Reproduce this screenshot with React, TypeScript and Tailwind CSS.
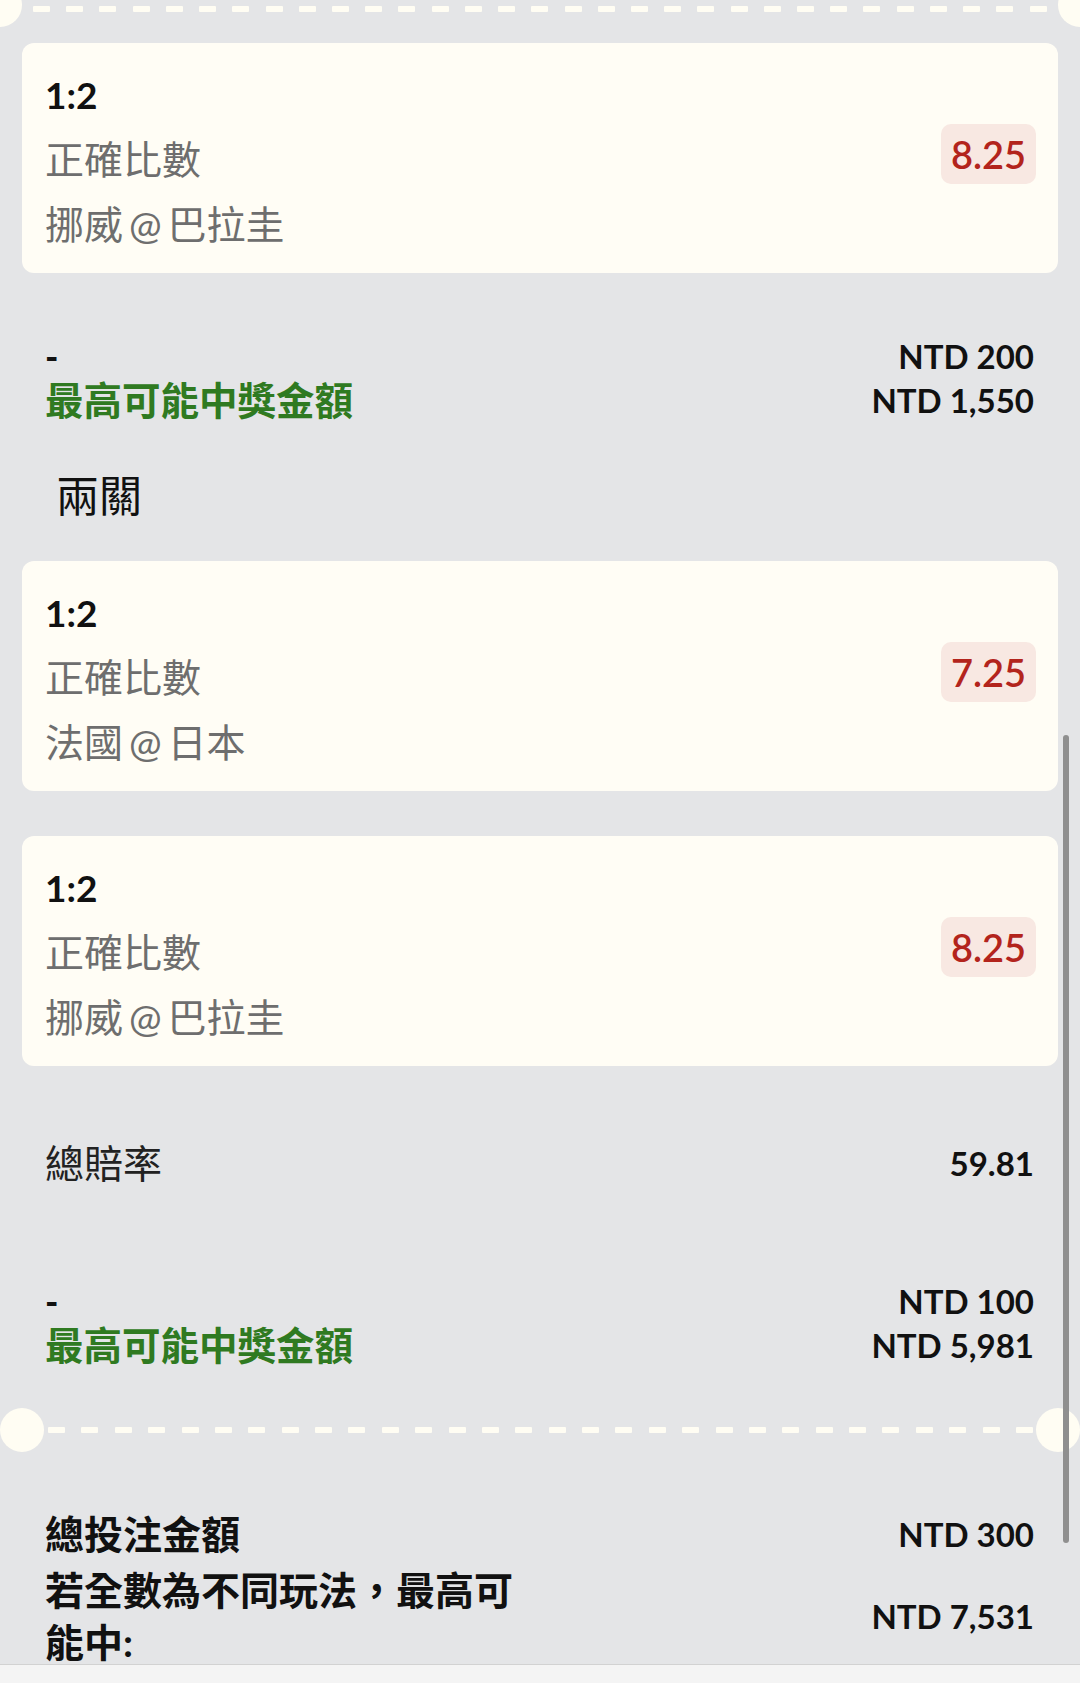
const font = "font-['Lato','Noto_Sans_CJK_TC',sans-serif]";

const Dashes = ({ count }: { count: number }) => (
  <div className="flex w-full justify-between">
    {Array.from({ length: count }).map((_, i) => (
      <span key={i} className="block h-[6px] w-[17px] rounded-[1px] bg-[#fffdf3]" />
    ))}
  </div>
);

type Bet = { score: string; market: string; teams: string; odds: string };

const BetCard = ({ score, market, teams, odds }: Bet) => (
  <div className="mx-[22px] flex items-center justify-between rounded-[12px] bg-[#fffdf5] pt-[19px] pb-[16px] pl-[23px] pr-[22px]">
    <div className="leading-[65px]">
      <div className="text-[37px] font-bold text-[#111]">{score}</div>
      <div className="text-[39px] text-[#6e6e6e]">{market}</div>
      <div className="text-[39px] text-[#6e6e6e] [word-spacing:-4px]">{teams}</div>
    </div>
    <div className="mb-[12px] rounded-[10px] bg-[#f8e8e2] px-[10px] text-[38px] font-semibold leading-[60px] text-[#b3241c]">
      {odds}
    </div>
  </div>
);

const Payout = ({ stake, win }: { stake: string; win: string }) => (
  <div className="flex justify-between pl-[45px] pr-[46px] leading-[44px]">
    <div>
      <div className="text-[36px] font-black text-[#111]">-</div>
      <div className="text-[38.5px] font-bold text-[#2f7a21]">最高可能中獎金額</div>
    </div>
    <div className="text-right text-[33px] font-bold text-[#111]">
      <div>{stake}</div>
      <div>{win}</div>
    </div>
  </div>
);

export default function App() {
  return (
    <div className={`flex h-[1683px] w-[1080px] flex-col overflow-hidden bg-[#e4e5e7] ${font}`}>
      <div className="relative flex-1 overflow-hidden">
        {/* divider from previous ticket */}
        <div className="relative h-[18px] pt-[6px] pl-[33px] pr-[33px]">
          <span className="absolute -left-[22px] -top-[17px] h-[44px] w-[44px] rounded-full bg-[#fffdf3]" />
          <span className="absolute -right-[22px] -top-[17px] h-[44px] w-[44px] rounded-full bg-[#fffdf3]" />
          <Dashes count={31} />
        </div>

        <div className="mt-[25px]">
          <BetCard score="1:2" market="正確比數" teams="挪威 @ 巴拉圭" odds="8.25" />
        </div>

        <div className="mt-[61px]">
          <Payout stake="NTD 200" win="NTD 1,550" />
        </div>

        <div className="mt-[49px] pl-[56px] text-[43px] leading-[50px] text-[#111]">兩關</div>

        <div className="mt-[40px]">
          <BetCard score="1:2" market="正確比數" teams="法國 @ 日本" odds="7.25" />
        </div>
        <div className="mt-[45px]">
          <BetCard score="1:2" market="正確比數" teams="挪威 @ 巴拉圭" odds="8.25" />
        </div>

        <div className="mt-[73px] flex items-center justify-between pl-[45px] pr-[46px] leading-[48px]">
          <span className="text-[39px] text-[#222]">總賠率</span>
          <span className="text-[33px] font-bold text-[#111]">59.81</span>
        </div>

        <div className="mt-[92px]">
          <Payout stake="NTD 100" win="NTD 5,981" />
        </div>

        <div className="relative mt-[41px] flex h-[44px] items-center pl-[48px] pr-[47px]">
          <span className="absolute left-0 top-0 h-[44px] w-[44px] rounded-full bg-[#fffdf3]" />
          <span className="absolute right-0 top-0 h-[44px] w-[44px] rounded-full bg-[#fffdf3]" />
          <Dashes count={30} />
        </div>

        <div className="mt-[56px] pl-[45px] pr-[46px] font-bold text-[#111]">
          <div className="flex items-center justify-between leading-[52px]">
            <span className="text-[39px]">總投注金額</span>
            <span className="text-[33px]">NTD 300</span>
          </div>
          <div className="mt-[4px] flex items-center justify-between leading-[52px]">
            <span className="w-[480px] text-[39px]">若全數為不同玩法，最高可能中:</span>
            <span className="text-[33px]">NTD 7,531</span>
          </div>
        </div>

        {/* scrollbar thumb */}
        <div className="absolute right-[11px] top-[735px] h-[808px] w-[6px] rounded-full bg-[#8f8f8f]" />
      </div>
      <div className="h-[19px] border-t border-[#d2d2d2] bg-[#f4f4f4]" />
    </div>
  );
}
